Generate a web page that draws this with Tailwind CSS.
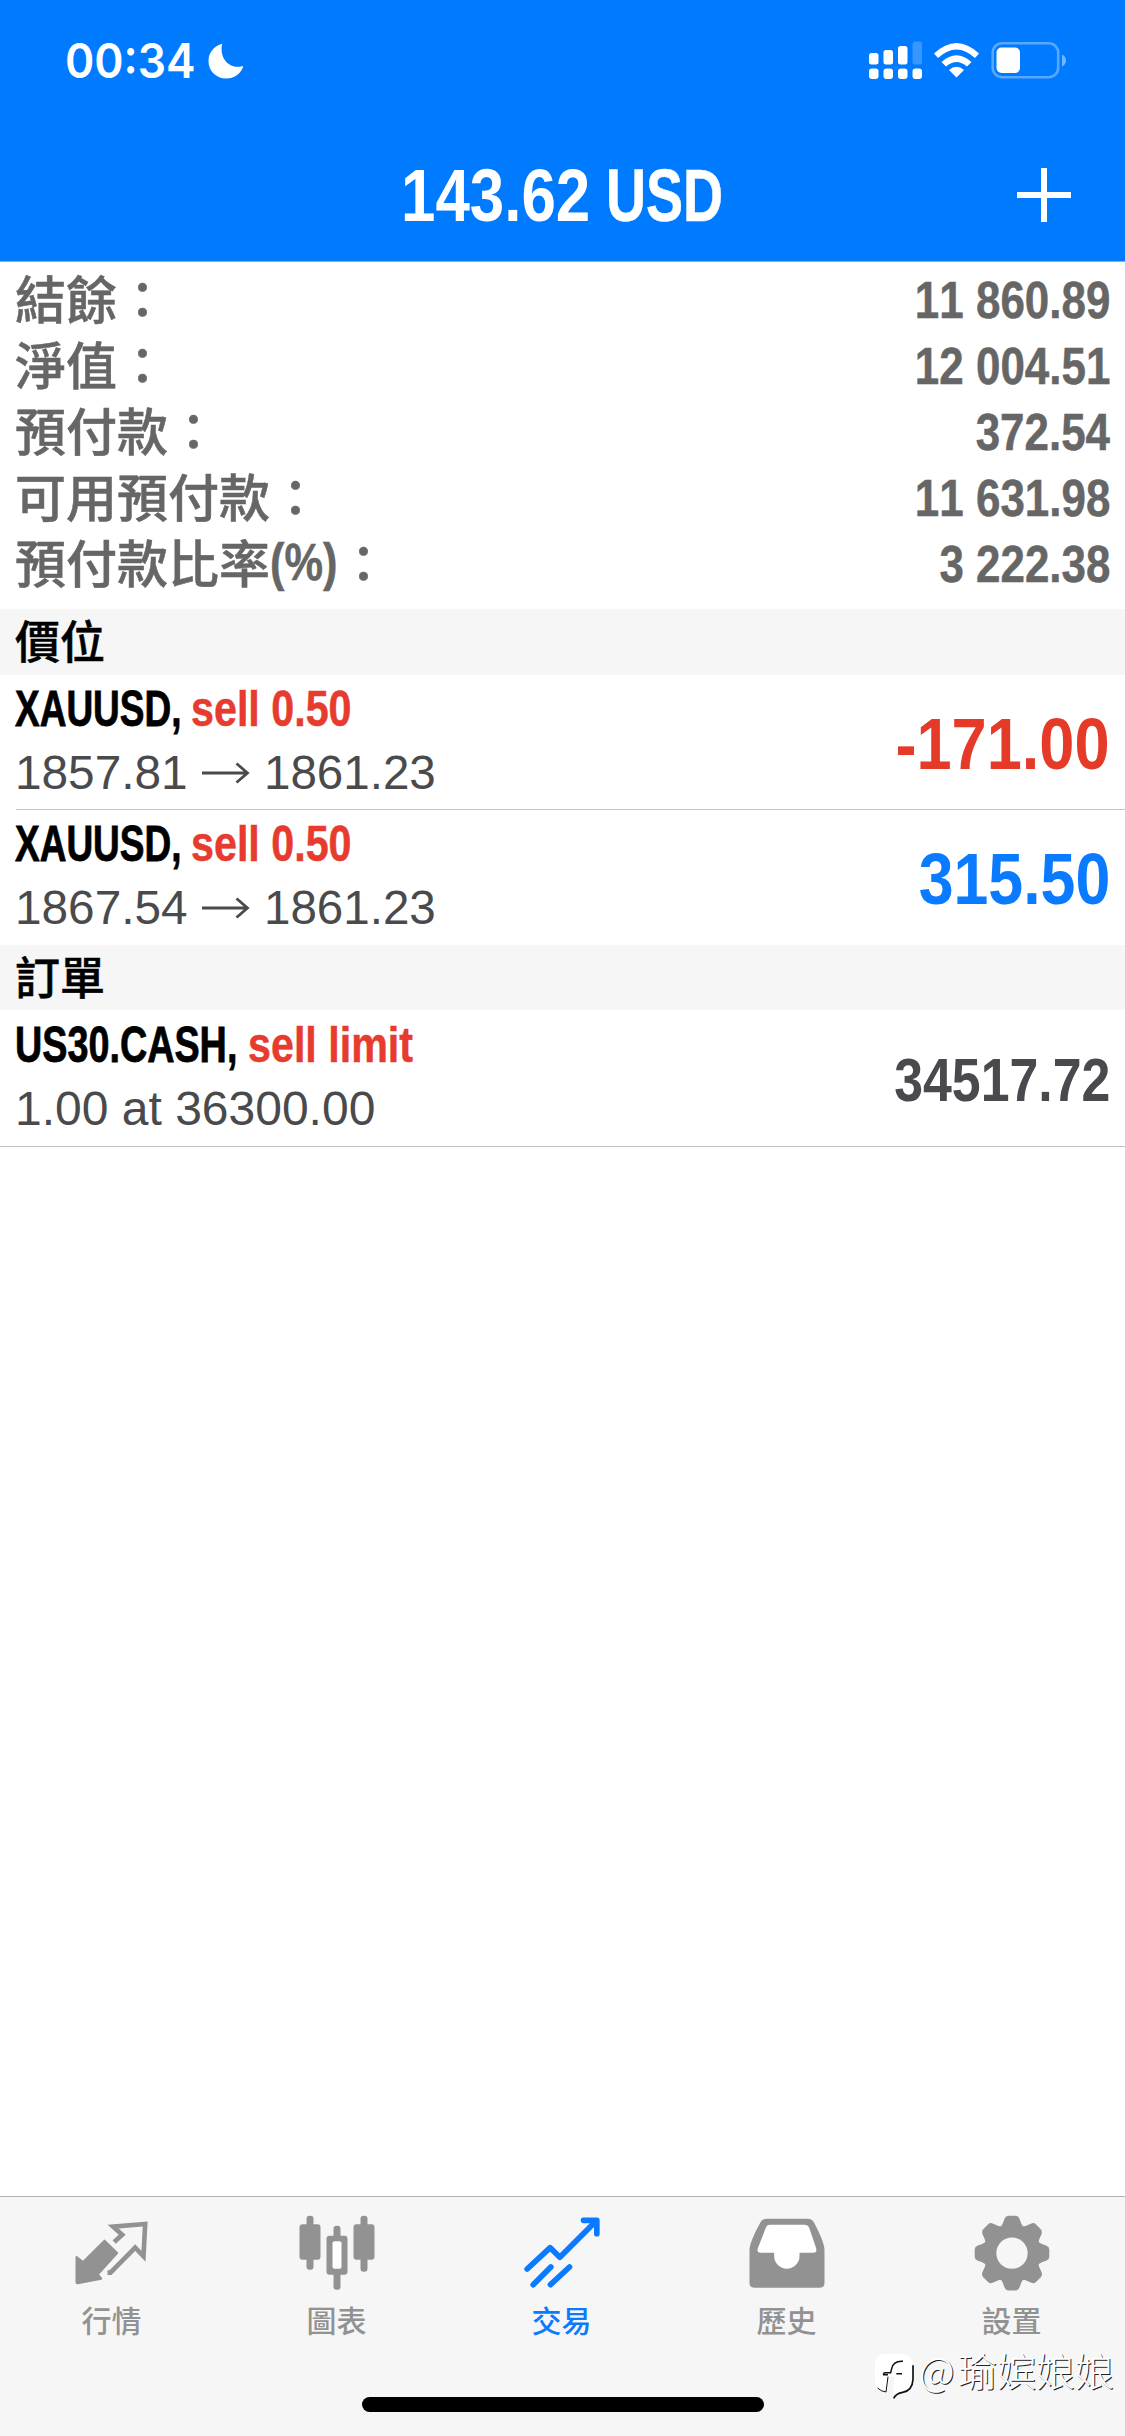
<!DOCTYPE html>
<html lang="zh-Hant">
<head>
<meta charset="utf-8">
<title>交易</title>
<script src="https://cdn.jsdelivr.net/npm/@tailwindcss/browser@4"></script>
</head>
<body class="bg-white">
<div class="relative flex flex-col w-[1125px] h-[2436px] overflow-hidden bg-white font-['Liberation_Sans',sans-serif] [font-kerning:none]">

  <header class="h-[262px] shrink-0 bg-[#007aff] border-b border-[#7fb2ee] text-white flex flex-col">
    <div class="h-[128px] flex items-start justify-between pl-[65px] pr-[59px] pt-[41px]">
      <div class="flex items-center h-10 gap-[13px]">
        <span class="font-['Inter',sans-serif] font-semibold text-[48px] leading-10 w-[130px] whitespace-nowrap"><span class="inline-block origin-left scale-x-[.925]">00:34</span></span>
        <svg class="w-9 h-9" viewBox="0 0 36 36" fill="#fff"><path d="M13.500 1C14 .6 14.300 1 14 1.800C11.500 14 20 26.500 34 23.300C35 23 35.400 23.400 35 24.300C32 31.500 26 35.500 18.500 35.500C8 35.500 .5 28 .5 18C.5 10 5.500 3.500 13.500 1Z"/></svg>
      </div>
      <svg class="w-[198px] h-10" viewBox="868 41 198 40" fill="#fff">
        <rect x="869" y="53" width="9.500" height="11.500" rx="2.500"/><rect x="883.500" y="50" width="9.500" height="14.500" rx="2.500"/><rect x="898" y="46" width="9.500" height="18.500" rx="2.500"/><rect x="912.500" y="41.500" width="9.500" height="23" rx="2.500" fill-opacity=".22"/>
        <rect x="869" y="68.500" width="9.500" height="10.500" rx="3"/><rect x="883.500" y="68.500" width="9.500" height="10.500" rx="3"/><rect x="898" y="68.500" width="9.500" height="10.500" rx="3"/><rect x="912.500" y="68.500" width="9.500" height="10.500" rx="3"/>
        <path d="M934 53.500Q956.500 32.500 979 53.500L975 58Q956.500 41 938 58Z"/>
        <path d="M941.500 62Q956.500 48.500 971.500 62L967 66.500Q956.500 57.500 946 66.500Z"/>
        <path d="M949 70Q956.500 63.500 964 70L956.500 77.500Z"/>
        <rect x="992.700" y="43.200" width="65.500" height="34" rx="9.500" fill="none" stroke="#fff" stroke-opacity=".35" stroke-width="2.600"/>
        <rect x="996.500" y="47.500" width="23.500" height="25.500" rx="5"/>
        <path d="M1062 54.500Q1066 56.500 1066 60.500T1062 66.500Z" fill-opacity=".45"/>
      </svg>
    </div>
    <div class="h-[133px] grid grid-cols-[1fr_324px_1fr] items-center">
      <span></span>
      <h1 class="flex font-bold text-[75px] leading-[80px] whitespace-nowrap">
        <span class="w-[205px]"><span class="inline-block origin-left scale-x-[.825]">143.62</span></span>
        <span><span class="inline-block origin-left scale-x-[.74] [-webkit-text-stroke:0.600px_#fff]">USD</span></span>
      </h1>
      <svg class="w-[54px] h-[54px] justify-self-end mr-[54px]" viewBox="0 0 54 54" stroke="#fff" stroke-width="6"><path d="M0 27H54M27 0V54"/></svg>
    </div>
  </header>

  <section class="h-[347px] shrink-0 pt-[5px] px-[15px] text-[#666] font-bold [-webkit-text-stroke:0.500px_#666]">
    <div class="h-[66px] flex justify-between items-center"><span class="font-['Noto_Sans_CJK_TC',sans-serif] font-medium text-[51px] leading-[60px] pb-1.5">結餘：</span><span class="text-[52px] leading-[60px] origin-right scale-x-[.845]">11 860.89</span></div>
    <div class="h-[66px] flex justify-between items-center"><span class="font-['Noto_Sans_CJK_TC',sans-serif] font-medium text-[51px] leading-[60px] pb-1.5">淨值：</span><span class="text-[52px] leading-[60px] origin-right scale-x-[.845]">12 004.51</span></div>
    <div class="h-[66px] flex justify-between items-center"><span class="font-['Noto_Sans_CJK_TC',sans-serif] font-medium text-[51px] leading-[60px] pb-1.5">預付款：</span><span class="text-[52px] leading-[60px] origin-right scale-x-[.845]">372.54</span></div>
    <div class="h-[66px] flex justify-between items-center"><span class="font-['Noto_Sans_CJK_TC',sans-serif] font-medium text-[51px] leading-[60px] pb-1.5">可用預付款：</span><span class="text-[52px] leading-[60px] origin-right scale-x-[.845]">11 631.98</span></div>
    <div class="h-[66px] flex justify-between items-center"><span class="flex font-['Noto_Sans_CJK_TC',sans-serif] font-medium text-[51px] leading-[60px] pb-1.5">預付款比率<span class="w-[68px] translate-y-0.5 font-['Liberation_Sans',sans-serif] font-bold"><span class="inline-block origin-left scale-x-[.85]">(%)</span></span>：</span><span class="text-[52px] leading-[60px] origin-right scale-x-[.845]">3 222.38</span></div>
  </section>

  <h2 class="h-[66px] shrink-0 bg-[#f6f6f6] px-[15px] font-['Noto_Sans_CJK_TC',sans-serif] font-medium text-[45px] leading-[61px] text-black [-webkit-text-stroke:0.500px_#000]">價位</h2>

  <div class="h-[135px] shrink-0 flex justify-between ml-4 pr-[15px] border-b border-[#c4c4c6] pt-0.5 whitespace-nowrap">
    <div class="-ml-px">
      <div class="flex font-bold text-[50px] leading-[64px]"><span class="w-[176px] text-black"><span class="inline-block origin-left scale-x-[.74] [-webkit-text-stroke:0.800px_#000]">XAUUSD,</span></span><span class="text-[#e63b2e]"><span class="inline-block origin-left scale-x-[.825] [-webkit-text-stroke:0.500px_#e63b2e]">sell 0.50</span></span></div>
      <div class="flex items-center text-[48px] leading-[63px] text-[#4a4a4d]"><span class="w-[187px]"><span class="inline-block origin-left scale-x-[.995]">1857.81</span></span><svg class="w-[48px] h-6 mr-[14px]" viewBox="0 0 48 24" fill="none" stroke="currentColor" stroke-width="2.800"><path d="M0 12H45M34.500 2.500L45.500 12L34.500 21.500"/></svg><span class="inline-block origin-left scale-x-[.99]">1861.23</span></div>
    </div>
    <span class="self-center pt-0.5 font-bold text-[73px] leading-[80px] text-[#e63a28] origin-right scale-x-[.865]">-171.00</span>
  </div>

  <div class="h-[135px] shrink-0 flex justify-between ml-4 pr-[15px] pt-0.5 whitespace-nowrap">
    <div class="-ml-px">
      <div class="flex font-bold text-[50px] leading-[64px]"><span class="w-[176px] text-black"><span class="inline-block origin-left scale-x-[.74] [-webkit-text-stroke:0.800px_#000]">XAUUSD,</span></span><span class="text-[#e63b2e]"><span class="inline-block origin-left scale-x-[.825] [-webkit-text-stroke:0.500px_#e63b2e]">sell 0.50</span></span></div>
      <div class="flex items-center text-[48px] leading-[63px] text-[#4a4a4d]"><span class="w-[187px]"><span class="inline-block origin-left scale-x-[.995]">1867.54</span></span><svg class="w-[48px] h-6 mr-[14px]" viewBox="0 0 48 24" fill="none" stroke="currentColor" stroke-width="2.800"><path d="M0 12H45M34.500 2.500L45.500 12L34.500 21.500"/></svg><span class="inline-block origin-left scale-x-[.99]">1861.23</span></div>
    </div>
    <span class="self-center pt-px font-bold text-[73px] leading-[80px] text-[#0a7aff] origin-right scale-x-[.858]">315.50</span>
  </div>

  <h2 class="h-[65px] shrink-0 bg-[#f6f6f6] px-[15px] font-['Noto_Sans_CJK_TC',sans-serif] font-medium text-[45px] leading-[61px] text-black [-webkit-text-stroke:0.500px_#000]">訂單</h2>

  <div class="h-[137px] shrink-0 flex justify-between px-[15px] border-b border-[#c4c4c6] pt-[3px] whitespace-nowrap">
    <div>
      <div class="flex font-bold text-[50px] leading-[64px]"><span class="w-[233px] text-black"><span class="inline-block origin-left scale-x-[.755] [-webkit-text-stroke:0.800px_#000]">US30.CASH,</span></span><span class="text-[#e63b2e]"><span class="inline-block origin-left scale-x-[.825] [-webkit-text-stroke:0.500px_#e63b2e]">sell limit</span></span></div>
      <div class="text-[48px] leading-[63px] text-[#4a4a4d]">1.00 at 36300.00</div>
    </div>
    <span class="self-center font-bold text-[61px] leading-[80px] text-[#4a4a4e] origin-right scale-x-[.85]">34517.72</span>
  </div>

  <main class="flex-1"></main>

  <nav class="h-[240px] shrink-0 bg-[#f6f6f6] border-t border-[#b2b2b2] grid grid-cols-5 content-start pt-4 text-[#929292] font-['Noto_Sans_CJK_TC',sans-serif] font-medium text-[30px] leading-9">
    <div class="flex flex-col items-center gap-[8px]">
      <svg class="w-20 h-20 shrink-0" viewBox="217.500 100 240 240" fill="currentColor">
        <path stroke="currentColor" stroke-width="6" stroke-linejoin="round" d="M312 183L350 220L292 284L302 297L232 311Q228 311 228 306L228 232L248 247Z"/>
        <path fill="none" stroke="currentColor" stroke-width="14" d="M341 187L365 165L338 141L434 133L429 230L404 204L330 279L321 279"/>
      </svg><span class="-ml-0.5">行情</span></div>
    <div class="flex flex-col items-center gap-[8px]">
      <svg class="w-20 h-20 shrink-0" viewBox="892.500 100 240 240" fill="currentColor">
        <rect x="918" y="108" width="21" height="162" rx="9"/><rect x="897" y="134" width="63" height="106" rx="9"/>
        <rect x="1080" y="108" width="21" height="168" rx="9"/><rect x="1059" y="134" width="63" height="106" rx="9"/>
        <rect x="999" y="138" width="21" height="192" rx="9"/><rect x="978" y="168" width="63" height="117" rx="9"/><rect x="996" y="185" width="27" height="82" rx="6" fill="#fff"/>
      </svg><span class="-ml-0.5">圖表</span></div>
    <div class="flex flex-col items-center gap-[8px] text-[#0a7aff]">
      <svg class="w-20 h-20 shrink-0" viewBox="367.500 100 240 240" fill="none" stroke="currentColor" stroke-width="17" stroke-linejoin="round">
        <path stroke-linecap="round" d="M380 268L449 204L478 233L580 131M549 122H589V162"/><path fill="currentColor" stroke="none" d="M560 122H589V151Z"/>
        <path stroke-linecap="round" d="M398 315L451 262M450 315L507 262"/>
      </svg><span class="-ml-0.5">交易</span></div>
    <div class="flex flex-col items-center gap-[8px]">
      <svg class="w-20 h-20 shrink-0" viewBox="142.500 100 240 240" fill="currentColor">
        <path d="M198 117H322Q334 117 340 128Q372 188 372 212V310Q372 324 358 324H161Q147 324 147 310V212Q147 188 180 128Q186 117 198 117Z"/>
        <path fill="#fff" d="M208 135H312Q322 135 326 144L347 206Q350 219 339 219H297V229A38 38 0 0 1 221 229V219H180Q168 219 172 206L196 144Q199 135 208 135Z"/>
      </svg><span class="-ml-0.5">歷史</span></div>
    <div class="flex flex-col items-center gap-[8px]">
      <svg class="w-20 h-20 shrink-0" viewBox="817.500 100 240 240" fill="currentColor">
        <g transform="translate(934.500 220.500)">
          <circle r="84"/>
          <path id="tooth" d="M-40 -76Q-31 -79 -28 -88L-22 -104Q-19 -112 -10 -112H10Q19 -112 22 -104L28 -88Q31 -79 40 -76L30 -60H-30Z"/>
          <use href="#tooth" transform="rotate(45)"/><use href="#tooth" transform="rotate(90)"/><use href="#tooth" transform="rotate(135)"/><use href="#tooth" transform="rotate(180)"/><use href="#tooth" transform="rotate(225)"/><use href="#tooth" transform="rotate(270)"/><use href="#tooth" transform="rotate(315)"/>
          <circle r="47" fill="#f6f6f6"/>
        </g>
      </svg><span class="-ml-0.5">設置</span></div>
  </nav>

  <!-- home indicator -->
  <div class="absolute left-[362px] top-[2397px] w-[402px] h-[15px] rounded-full bg-black"></div>

  <!-- author tag -->
  <div class="absolute left-[874px] top-[2350px] flex items-start gap-1 text-white whitespace-nowrap">
    <svg class="w-[41px] h-[52px]" viewBox="522 510 123 156">
      <path fill="#fff" d="M556 522H606Q637 522 637 556V598Q637 634 606 636Q588 638 579 652L582 590L568 590L556 636Q525 632 525 598V556Q525 522 556 522Z"/>
      <path fill="none" stroke="#111" stroke-width="4.500" d="M609 544Q580 542 575 566L572 578H556Q550 578 551 584H564M589 581H606"/>
      <path fill="none" stroke="#111" stroke-width="3" d="M564 590L558 636Q542 634 533 624"/>
      <path fill="none" stroke="#111" stroke-width="5" d="M639 556V598Q637 632 608 637Q588 640 581 655"/>
    </svg>
    <span class="-mt-0.5 font-['Noto_Sans_CJK_SC',sans-serif] font-light text-[39px] leading-[42px] [text-shadow:1px_1px_0.500px_#222]"><span class="inline-block w-[39px]">@</span>瑜嫔娘娘</span>
  </div>
</div>
</body>
</html>
